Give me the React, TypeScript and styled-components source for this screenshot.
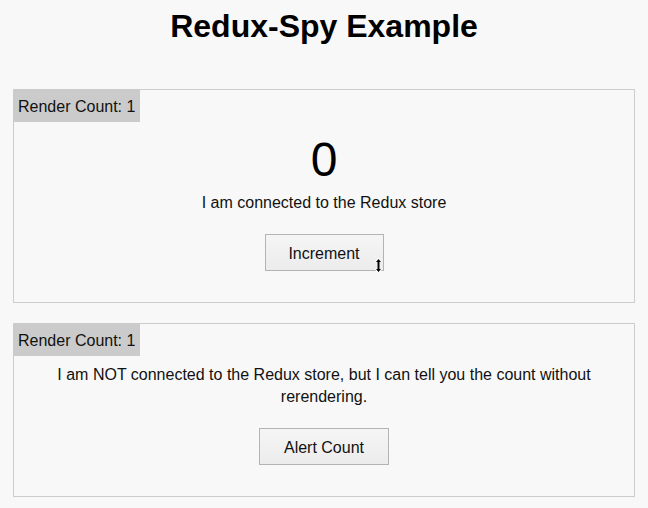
import React from "react";
import styled, { createGlobalStyle } from "styled-components";

const GlobalStyle = createGlobalStyle`
  html, body {
    margin: 0;
    padding: 0;
    background: #f8f8f8;
  }
  body {
    font-family: "Liberation Sans", Arial, Helvetica, sans-serif;
    color: #111;
  }
`;

const Page = styled.div`
  padding: 8px 13px 0;
  display: flex;
  flex-direction: column;
  gap: 20px;
`;

const Title = styled.h1`
  margin: 0 0 24px;
  text-align: center;
  font-size: 32px;
  font-weight: bold;
  line-height: 37px;
  color: #000;
`;

const Panel = styled.section`
  border: 1px solid #cccccc;
  display: flex;
  flex-direction: column;
  align-items: center;
`;

const Badge = styled.div`
  align-self: flex-start;
  margin: -1px 0 0 -1px;
  padding: 8px 5px 6px;
  background: #cbcbcb;
  font-size: 16px;
  line-height: 19px;
  color: #111;
`;

const Count = styled.div`
  margin-top: 14px;
  font-size: 48px;
  line-height: 48px;
  color: #000;
`;

const Message = styled.p`
  margin: 8px 0 0;
  font-size: 16px;
  line-height: 22px;
  text-align: center;
  max-width: 560px;
`;

const ButtonWrap = styled.div`
  position: relative;
  margin: 20px 0 31px;
`;

const Button = styled.button<{ $width: number }>`
  width: ${(p) => p.$width}px;
  height: 37px;
  padding: 2px 0 0;
  border: 1px solid #b4b4b4;
  background: linear-gradient(#f5f5f5, #ececec);
  font-family: "Liberation Sans", Arial, Helvetica, sans-serif;
  font-size: 16px;
  color: #111;
  cursor: pointer;
`;

const Cursor = styled.svg`
  position: absolute;
  left: 109px;
  top: 23px;
  pointer-events: none;
`;

function ResizeCursor() {
  return (
    <Cursor width="9" height="17" viewBox="0 0 9 17">
      <path
        d="M4.5 0.5 L8.5 5 L6 5 L6 12 L8.5 12 L4.5 16.5 L0.5 12 L3 12 L3 5 L0.5 5 Z"
        fill="#fff"
      />
      <path
        d="M4.5 2 L7 5 L5.5 5 L5.5 12 L7 12 L4.5 15 L2 12 L3.5 12 L3.5 5 L2 5 Z"
        fill="#000"
      />
    </Cursor>
  );
}

export default function App() {
  return (
    <>
      <GlobalStyle />
      <Page>
        <Title>Redux-Spy Example</Title>
        <Panel>
          <Badge>Render Count: 1</Badge>
          <Count>0</Count>
          <Message>I am connected to the Redux store</Message>
          <ButtonWrap>
            <Button $width={119}>Increment</Button>
            <ResizeCursor />
          </ButtonWrap>
        </Panel>
        <Panel>
          <Badge>Render Count: 1</Badge>
          <Message>
            I am NOT connected to the Redux store, but I can tell you the count
            without rerendering.
          </Message>
          <ButtonWrap>
            <Button $width={130}>Alert Count</Button>
          </ButtonWrap>
        </Panel>
      </Page>
    </>
  );
}
